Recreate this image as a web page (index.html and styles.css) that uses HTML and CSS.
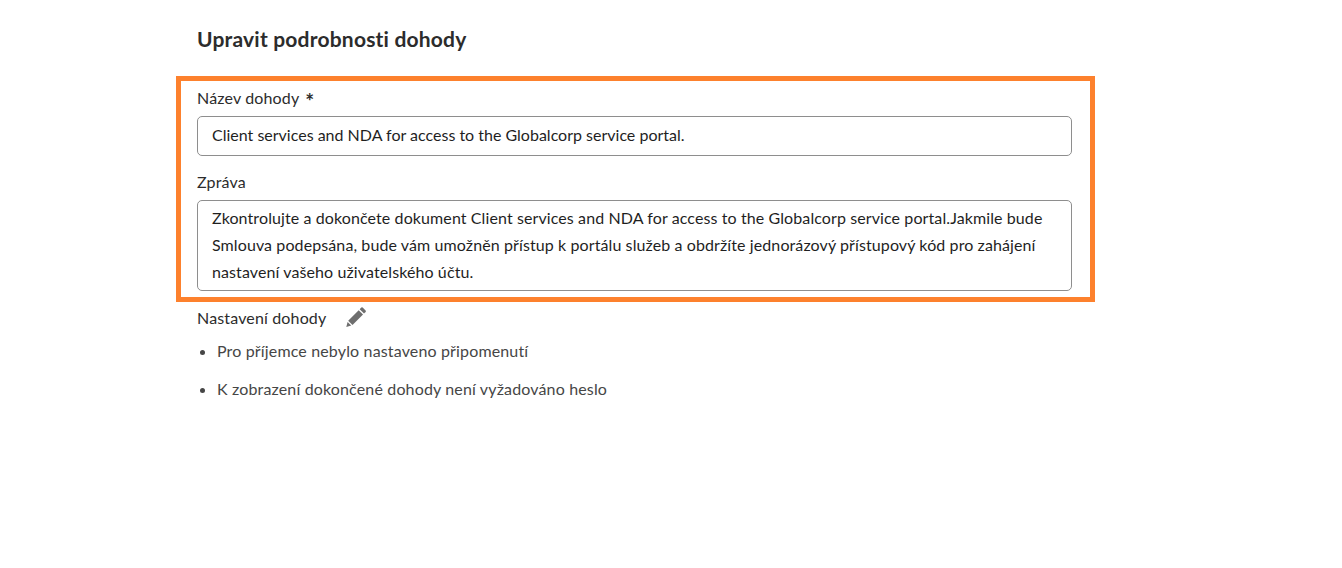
FILE: index.html
```html
<!DOCTYPE html>
<html lang="cs">
<head>
  <meta charset="UTF-8" />
  <title>Upravit podrobnosti dohody</title>
  <link rel="stylesheet" href="styles.css">
</head>
<body>
  <main class="page">
    <h1 class="title">Upravit podrobnosti dohody</h1>

    <section class="highlight">
      <div class="field-label">Název dohody <span class="required">*</span></div>
      <div class="text-box name-box">Client services and NDA for access to the Globalcorp service portal.</div>
      <div class="field-label message-label">Zpráva</div>
      <div class="text-box message-box">Zkontrolujte a dokončete dokument Client services and NDA for access to the Globalcorp service portal.Jakmile bude Smlouva podepsána, bude vám umožněn přístup k portálu služeb a obdržíte jednorázový přístupový kód pro zahájení nastavení vašeho uživatelského účtu.</div>
    </section>

    <div class="settings-head">
      <span>Nastavení dohody</span>
      <svg class="pencil" width="22" height="22" viewBox="0 0 22 22">
        <path d="M16.3 1.6a1 1 0 0 1 1.4 0l2.9 2.9a1 1 0 0 1 0 1.4l-1.6 1.6-4.3-4.3z" fill="#6e6e6e"/>
        <path d="M13.7 4.2 18 8.5 7.5 19 3.2 14.7z" fill="#6e6e6e"/>
        <path d="M2.6 16 6.2 19.6 1.3 21z" fill="#6e6e6e"/>
      </svg>
    </div>
    <ul class="settings-list">
      <li>Pro příjemce nebylo nastaveno připomenutí</li>
      <li>K zobrazení dokončené dohody není vyžadováno heslo</li>
    </ul>
  </main>
</body>
</html>
```

FILE: styles.css
```css
body {
  margin: 0;
  background: #fff;
  color: #2c2c2c;
  font-family: "Lato", "Open Sans", sans-serif;
  font-size: 16px;
}

.page {
  width: 919px;
  margin-left: 176px;
}

.title {
  margin: 0;
  padding: 26px 0 0 21px;
  height: 76px;
  box-sizing: border-box;
  font-size: 21px;
  line-height: 26px;
  font-weight: 700;
  letter-spacing: 0.2px;
}

.highlight {
  border: 5px solid #fd812d;
  padding: 6px 18px 6px 16px;
  height: 226px;
  box-sizing: border-box;
}

.field-label {
  height: 29px;
  line-height: 22px;
  color: #2c2c2c;
  letter-spacing: 0.15px;
}

.required {
  margin-left: 2px;
  font-size: 21px;
  font-weight: 700;
  line-height: 0;
  vertical-align: -5px;
}

.text-box {
  border: 1px solid #8e8e8e;
  border-radius: 5px;
  box-sizing: border-box;
  padding: 0 14px;
  color: #1f1f1f;
}

.name-box {
  height: 40px;
  line-height: 36px;
}

.message-label {
  margin-top: 15px;
}

.message-box {
  height: 91px;
  padding-top: 3px;
  line-height: 27px;
  letter-spacing: 0.1px;
}

.settings-head {
  display: flex;
  align-items: center;
  gap: 19px;
  height: 30px;
  padding-left: 21px;
  letter-spacing: 0.15px;
}

.settings-list {
  margin: 8px 0 0;
  padding: 0 0 0 41px;
  color: #464646;
  letter-spacing: 0.15px;
}

.settings-list li {
  line-height: 22px;
  margin-bottom: 16px;
}
```
